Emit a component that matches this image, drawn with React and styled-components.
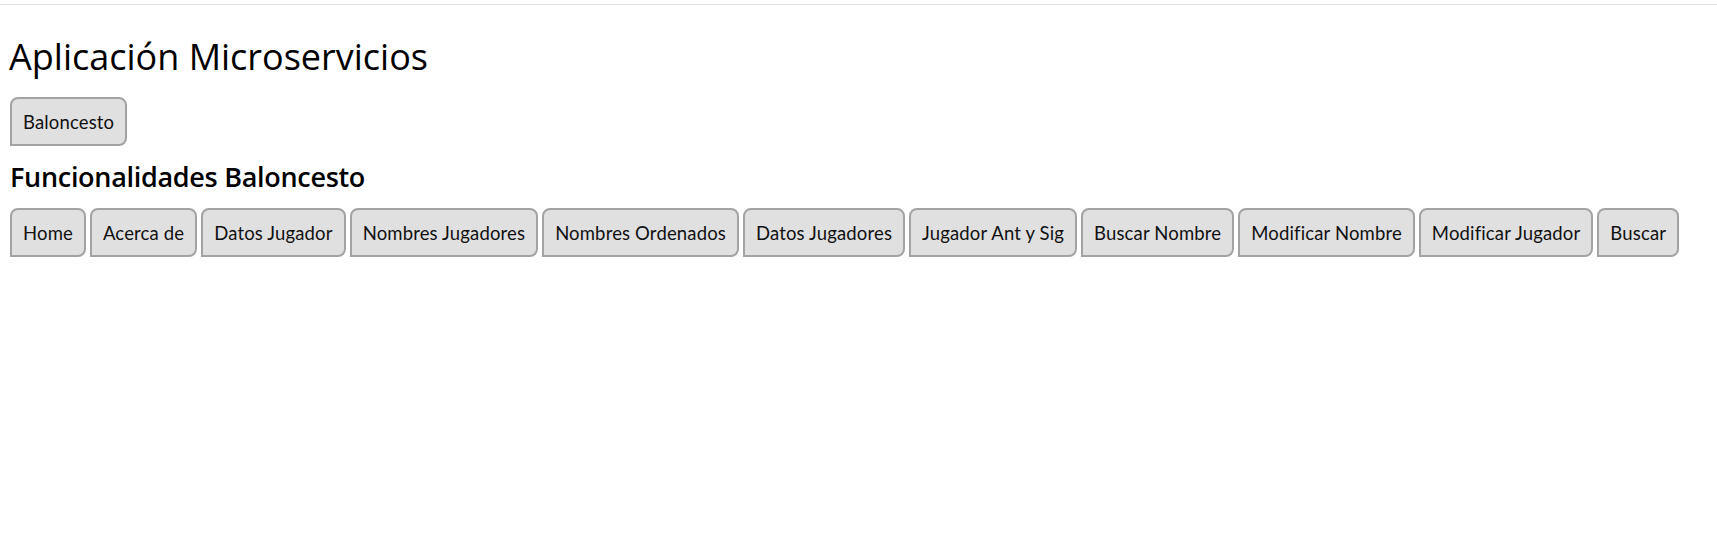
import React from 'react';
import styled, { createGlobalStyle } from 'styled-components';

const GlobalStyle = createGlobalStyle`
  body {
    margin: 0;
    background: #ffffff;
    font-family: Lato, "Noto Sans", sans-serif;
    color: #111111;
  }
`;

const funcionalidades = [
  'Home',
  'Acerca de',
  'Datos Jugador',
  'Nombres Jugadores',
  'Nombres Ordenados',
  'Datos Jugadores',
  'Jugador Ant y Sig',
  'Buscar Nombre',
  'Modificar Nombre',
  'Modificar Jugador',
  'Buscar'
];

class App extends React.Component {
  render() {
    return (
      <Page>
        <GlobalStyle />
        <TopRule />
        <Content>
          <Title>Aplicación Microservicios</Title>
          <NavButton>Baloncesto</NavButton>
          <Subtitle>Funcionalidades Baloncesto</Subtitle>
          <ButtonRow>
            {funcionalidades.map(name => (
              <NavButton key={name}>{name}</NavButton>
            ))}
          </ButtonRow>
        </Content>
      </Page>
    );
  }
}

const Page = styled.div`
  min-height: 552px;
  background: #ffffff;
`;

const TopRule = styled.div`
  height: 4px;
  border-bottom: 1px solid #e2e2e2;
`;

const Content = styled.div`
  padding: 0 10px;
  display: flex;
  flex-direction: column;
  align-items: flex-start;
`;

const Title = styled.h1`
  margin: 32px 0 20px -1px;
  font-family: "Open Sans", Lato, sans-serif;
  font-size: 36px;
  font-weight: 500;
  line-height: 40px;
  color: #000000;
`;

const Subtitle = styled.h2`
  margin: 15px 0 15px 0;
  font-family: "Open Sans", Lato, sans-serif;
  font-size: 27px;
  font-weight: 600;
  line-height: 32px;
  letter-spacing: -0.3px;
  color: #000000;
`;

const ButtonRow = styled.div`
  display: flex;
  gap: 4px;
`;

const NavButton = styled.button`
  font-family: Lato, "Noto Sans", sans-serif;
  font-size: 18.5px;
  line-height: 24px;
  letter-spacing: 0.15px;
  color: #111111;
  background: #e0e0e0;
  border: 2px solid #a3a3a3;
  border-radius: 8px 8px 8px 0;
  padding: 11px 11px 10px;
  cursor: pointer;
`;

export default App;
